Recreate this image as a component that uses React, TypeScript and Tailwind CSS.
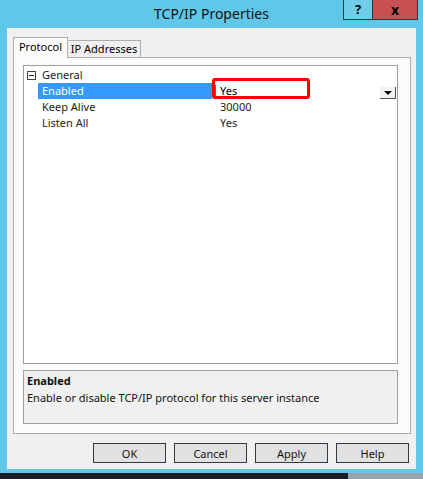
import React from 'react';

const rows = [
  { label: 'Keep Alive', value: '30000' },
  { label: 'Listen All', value: 'Yes' },
];

function TitleBar() {
  return (
    <div className="relative h-[28px] flex items-center justify-center">
      <span className="text-[14px] text-[#111] leading-none">TCP/IP Properties</span>
      <div className="absolute top-0 right-[5px] flex">
        <div className="w-[30px] h-[20px] bg-[#6fcdea] border border-[#2a3b44] border-t-0 flex items-center justify-center text-[13px] font-bold">?</div>
        <div className="w-[45px] h-[20px] bg-[#c75050] border border-[#2a3b44] border-t-0 border-l-0 flex items-center justify-center text-[14px] font-bold">x</div>
      </div>
    </div>
  );
}

function PropertyGrid() {
  return (
    <div className="relative h-[299px] border border-[#a0a0a0] bg-white pt-[1px] text-[11px] leading-[16px]">
      {/* General category */}
      <div className="flex h-[16px]">
        <div className="w-[14px] flex items-center justify-center">
          <div className="w-[9px] h-[9px] border border-[#444] flex items-center justify-center">
            <div className="w-[5px] h-px bg-[#222]" />
          </div>
        </div>
        <div className="pl-[4px] text-[#222]">General</div>
      </div>

      {/* Enabled (selected) */}
      <div className="flex h-[16px]">
        <div className="w-[14px]" />
        <div className="w-[174px] bg-[#3399ff] text-white pl-[4px]">Enabled</div>
        <div className="flex-1 flex items-end justify-between">
          <div className="flex items-center h-[16px]">
            <div className="ml-[3px] w-px h-[13px] bg-[#3a6ea5]" />
            <span className="pl-[4px]">Yes</span>
          </div>
          <div className="w-[16px] h-[12px] mr-px bg-[#f2f2f2] border-b border-r border-[#555] flex items-center justify-center">
            <div className="w-0 h-0 border-l-[4px] border-r-[4px] border-t-[4px] border-l-transparent border-r-transparent border-t-black" />
          </div>
        </div>
      </div>

      {rows.map((r) => (
        <div key={r.label} className="flex h-[16px]">
          <div className="w-[14px]" />
          <div className="w-[174px] pl-[4px] text-[#222]">{r.label}</div>
          <div className="flex-1 pl-[8px] text-[#222]">{r.value}</div>
        </div>
      ))}

      {/* annotation box */}
      <div className="absolute left-[188px] top-[12px] w-[98px] h-[21px] border-[3px] border-[#ff0000] rounded-[3px]" />
    </div>
  );
}

export default function App() {
  return (
    <div className="w-[423px] h-[479px] bg-[#5fc8e9] flex flex-col overflow-hidden font-['Noto_Sans',sans-serif] text-black">
      <TitleBar />
      <div className="mx-[7px] h-[441px] bg-[#f0f0f0] flex flex-col pt-[8px]">
        {/* tabs */}
        <div className="flex items-end h-[21px] pl-[6px] text-[11px] whitespace-nowrap">
          <div className="relative z-10 -mb-px w-[55px] h-[21px] border border-[#adadad] border-b-0 bg-[#fbfbfb] flex items-center justify-center pb-[2px]">
            Protocol
          </div>
          <div className="w-[73px] h-[17px] border border-[#adadad] border-l-0 border-b-0 bg-[#f0f0f0] flex items-center justify-center">
            IP Addresses
          </div>
        </div>

        {/* tab panel */}
        <div className="ml-[6px] mr-[5px] h-[377px] border border-[#adadad] bg-[#fbfbfb] pt-[7px] pl-[9px] pr-[12px] flex flex-col gap-[6px]">
          <PropertyGrid />
          <div className="h-[54px] border border-[#a0a0a0] bg-[#f0f0f0] pl-[3px] pt-px text-[11px] leading-[17px] text-[#111]">
            <div className="font-bold">Enabled</div>
            <div>Enable or disable TCP/IP protocol for this server instance</div>
          </div>
        </div>

        {/* buttons */}
        <div className="mt-[9px] pr-[7px] flex justify-end gap-[8px]">
          {['OK', 'Cancel', 'Apply', 'Help'].map((b) => (
            <button
              key={b}
              className="w-[73px] h-[20px] border border-[#2f3a44] bg-[#e1e1e1] text-[11px] leading-none text-[#111]"
            >
              {b}
            </button>
          ))}
        </div>
      </div>
      <div className="h-[4px]" />
      <div className="h-[6px] bg-[#1b1e26] flex justify-end">
        <div className="w-[75px] h-full bg-[#9aa2ad]" />
      </div>
    </div>
  );
}
